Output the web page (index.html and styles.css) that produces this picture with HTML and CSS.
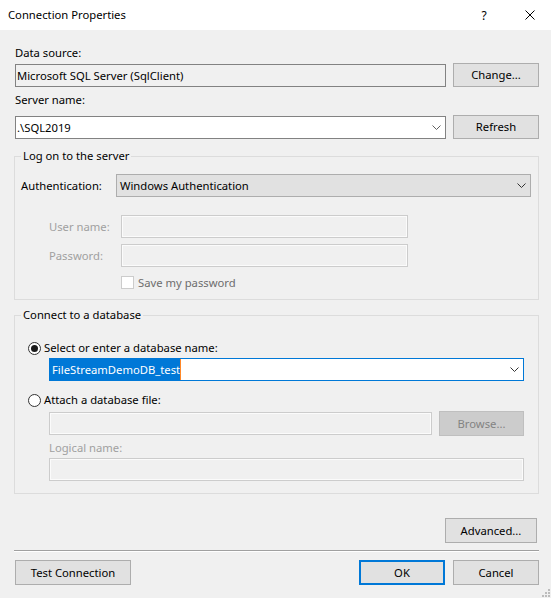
FILE: index.html
```html
<!DOCTYPE html>
<html>
<head>
<meta charset="utf-8">
<title>Connection Properties</title>
<link rel="stylesheet" href="styles.css">
</head>
<body>
<div class="dialog">
  <div class="titlebar">
    <span class="title">Connection Properties</span>
    <span class="tb-btn help">?</span>
    <span class="tb-btn close"><svg width="10" height="10" viewBox="0 0 10 10"><path d="M0.5 0.5 L9.5 9.5 M9.5 0.5 L0.5 9.5" stroke="#000" stroke-width="1" fill="none"/></svg></span>
  </div>
  <div class="content">
    <div class="label l-ds">Data source:</div>
    <div class="row r-ds">
      <div class="textbox readonly w-main">Microsoft SQL Server (SqlClient)</div>
      <button class="btn w-side">Change...</button>
    </div>
    <div class="label l-sn">Server name:</div>
    <div class="row r-sn">
      <div class="textbox combo w-main"><span class="combo-text">.\SQL2019</span><svg class="chev" width="9" height="5" viewBox="0 0 9 5"><path d="M0.5 0.5 L4.5 4.5 L8.5 0.5" stroke="#606060" stroke-width="1" fill="none"/></svg></div>
      <button class="btn w-side">Refresh</button>
    </div>

    <fieldset class="group g-logon">
      <legend>Log on to the server</legend>
      <div class="auth-row">
        <span class="auth-label">Authentication:</span>
        <div class="dropdown"><span class="combo-text">Windows Authentication</span><svg class="chev" width="9" height="5" viewBox="0 0 9 5"><path d="M0.5 0.5 L4.5 4.5 L8.5 0.5" stroke="#333" stroke-width="1" fill="none"/></svg></div>
      </div>
      <div class="cred-row first">
        <span class="cred-label">User name:</span>
        <div class="textbox disabled cred-input"></div>
      </div>
      <div class="cred-row">
        <span class="cred-label">Password:</span>
        <div class="textbox disabled cred-input"></div>
      </div>
      <div class="check-row">
        <span class="checkbox"></span>
        <span class="check-label">Save my password</span>
      </div>
    </fieldset>

    <fieldset class="group g-db">
      <legend>Connect to a database</legend>
      <div class="radio-row first">
        <span class="radio checked"></span>
        <span class="radio-label">Select or enter a database name:</span>
      </div>
      <div class="textbox combo focused db-combo"><span class="selected">FileStreamDemoDB_test</span><svg class="chev" width="9" height="5" viewBox="0 0 9 5"><path d="M0.5 0.5 L4.5 4.5 L8.5 0.5" stroke="#333" stroke-width="1" fill="none"/></svg></div>
      <div class="radio-row second">
        <span class="radio"></span>
        <span class="radio-label">Attach a database file:</span>
      </div>
      <div class="file-row">
        <div class="textbox disabled file-input"></div>
        <button class="btn disabled-btn browse">Browse...</button>
      </div>
      <div class="label disabled-text logical-label">Logical name:</div>
      <div class="textbox disabled logical-input"></div>
    </fieldset>

    <button class="btn advanced">Advanced...</button>
    <div class="separator"></div>
    <div class="bottom-row">
      <button class="btn test">Test Connection</button>
      <button class="btn default ok">OK</button>
      <button class="btn cancel">Cancel</button>
    </div>
  </div>
  <svg class="grip" width="8" height="8" viewBox="0 0 8 8">
    <rect x="6" y="0" width="2" height="2" fill="#bcbcbc"/>
    <rect x="3" y="3" width="2" height="2" fill="#bcbcbc"/>
    <rect x="6" y="3" width="2" height="2" fill="#bcbcbc"/>
    <rect x="0" y="6" width="2" height="2" fill="#bcbcbc"/>
    <rect x="3" y="6" width="2" height="2" fill="#bcbcbc"/>
    <rect x="6" y="6" width="2" height="2" fill="#bcbcbc"/>
  </svg>
</div>
</body>
</html>
```

FILE: styles.css
```css
* { box-sizing: border-box; }
html, body { margin: 0; padding: 0; }
body {
  font-family: "Noto Sans", "Open Sans", sans-serif;
  font-size: 11.25px;
  color: #000;
  background: #f0f0f0;
}
.dialog {
  width: 551px;
  height: 598px;
  background: #f0f0f0;
  position: relative;
  overflow: hidden;
  display: flex;
  flex-direction: column;
}
.titlebar {
  flex: none;
  height: 30px;
  background: #fff;
  display: flex;
  align-items: center;
}
.title { flex: 1; padding-left: 8px; line-height: 16px; }
.tb-btn {
  height: 30px;
  display: flex;
  align-items: center;
  justify-content: center;
}
.help { width: 50px; font-size: 12px; }
.close { width: 42px; }
.close svg { display: block; }

.content {
  flex: 1;
  display: flex;
  flex-direction: column;
  padding: 0 12px 0 14px;
}
.label { line-height: 16px; margin-left: 1px; }
.l-ds { margin-top: 15px; }
.l-sn { margin-top: 5px; }
.row { display: flex; align-items: flex-start; height: 24px; margin-left: 1px; }
.r-ds { margin-top: 2px; }
.r-sn { margin-top: 7px; }

.textbox {
  height: 23px;
  border: 1px solid #828282;
  background: #fff;
  display: flex;
  align-items: center;
  padding-left: 1px;
  line-height: 16px;
  white-space: nowrap;
}
.w-main { width: 431px; margin-top: 1px; }
.readonly { background: #f0f0f0; }
.combo { justify-content: space-between; }
.chev { display: block; flex: none; margin-right: 4px; }
.textbox.disabled {
  border-color: #cccccc;
  background: #f0f0f0;
  box-shadow: inset 0 0 0 1px #fbfbfb;
}
.focused { border-color: #0078d7; }

.btn {
  font: inherit;
  color: #000;
  background: #e1e1e1;
  border: 1px solid #adadad;
  height: 24px;
  padding: 0;
  margin: 0;
  line-height: 16px;
  text-align: center;
}
.w-side { width: 86px; margin-left: auto; }

.group {
  margin: 0;
  border: 1px solid #dcdcdc;
  min-width: 0;
}
.group legend { padding: 0 2px; line-height: 16px; }
.g-logon { margin-top: 9px; padding: 0 7px 9px 6px; }
.g-db { margin-top: 7px; padding: 0 7px 12px 6px; }

.auth-row { margin-top: 10px; display: flex; align-items: center; height: 23px; }
.auth-label { width: 95px; line-height: 16px; }
.dropdown {
  flex: 1;
  height: 23px;
  background: #e1e1e1;
  border: 1px solid #adadad;
  display: flex;
  align-items: center;
  justify-content: space-between;
  padding-left: 3px;
}
.dropdown .chev { margin-right: 4px; }

.cred-row { display: flex; align-items: center; height: 23px; margin-top: 6px; }
.cred-row.first { margin-top: 18px; }
.cred-label { width: 100px; padding-left: 28px; color: #a0a0a0; line-height: 16px; }
.cred-input { width: 287px; }

.check-row { margin-top: 8px; height: 15px; display: flex; align-items: center; margin-left: 100px; }
.checkbox {
  width: 13px; height: 13px;
  border: 1px solid #cccccc;
  background: #fff;
  flex: none;
}
.check-label { margin-left: 4px; color: #6d6d6d; line-height: 15px; }

.radio-row { display: flex; align-items: center; height: 16px; padding-left: 7px; }
.radio-row.first { margin-top: 17px; }
.radio-row.second { margin-top: 11px; }
.radio {
  width: 13px; height: 13px;
  border: 1px solid #333;
  border-radius: 50%;
  background: #fff;
  flex: none;
  display: flex;
  align-items: center;
  justify-content: center;
}
.radio.checked::after {
  content: "";
  width: 7px; height: 7px;
  border-radius: 50%;
  background: #1a1a1a;
}
.radio-label { margin-left: 3px; line-height: 16px; }

.db-combo {
  margin-top: 2px;
  margin-left: 28px;
  width: 475px;
  padding-left: 0;
  align-items: stretch;
}
.db-combo .chev { align-self: center; margin-right: 4px; }
.selected {
  background: #0078d7;
  color: #fff;
  padding-left: 2px;
  line-height: 21px;
  border-right: 1px solid #ff8728;
}

.file-row { margin-top: 3px; margin-left: 28px; display: flex; align-items: flex-start; height: 25px; }
.file-input { width: 383px; margin-top: 1px; }
.browse {
  width: 85px; height: 25px; margin-left: 7px;
  background: #cccccc; border-color: #bfbfbf; color: #838383;
}
.disabled-text { color: #a0a0a0; }
.logical-label { margin-top: 4px; margin-left: 28px; }
.logical-input { margin-top: 2px; margin-left: 28px; width: 475px; }

.advanced { align-self: flex-end; margin-top: 24px; margin-right: 2px; width: 92px; height: 25px; }
.separator {
  margin-top: 7px;
  height: 2px;
  border-top: 1px solid #a0a0a0;
  border-bottom: 1px solid #fff;
}
.bottom-row { margin-top: 8px; display: flex; height: 25px; }
.bottom-row .btn { height: 25px; }
.test { width: 116px; margin-left: 1px; }
.ok { width: 86px; margin-left: auto; }
.default { border: 2px solid #0078d7; }
.cancel { width: 86px; margin-left: 8px; }

.grip { position: absolute; right: 1px; bottom: 1px; }
```
